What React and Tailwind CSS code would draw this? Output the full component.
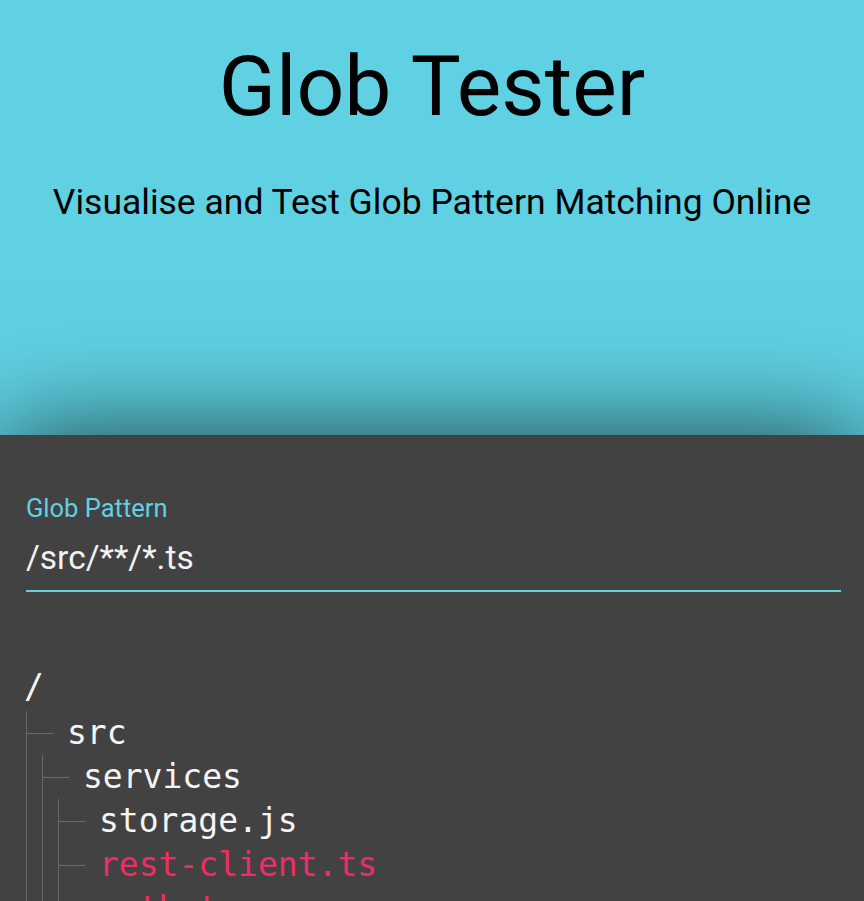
const tree = {
    name: '/',
    children: [
        {
            name: 'src',
            children: [
                {
                    name: 'services',
                    children: [
                        { name: 'storage.js' },
                        { name: 'rest-client.ts', match: true },
                        { name: 'auth.ts', match: true },
                    ],
                },
                { name: 'index.ts', match: true },
            ],
        },
        { name: 'package.json' },
    ],
};

const Branch = ({ nodes }) => (
    <ul className="border-l border-[#6b6b6b]">
        {nodes.map((node) => (
            <li key={node.name}>
                <div className="flex items-center h-[44px]">
                    <span className="w-[26px] h-px bg-[#6b6b6b]"></span>
                    <span className={`ml-[14px] ${node.match ? 'text-[#ee2d65]' : 'text-[#f5f5f5]'}`}>
                        {node.name}
                    </span>
                </div>
                {node.children && (
                    <div className="ml-[15px]">
                        <Branch nodes={node.children} />
                    </div>
                )}
            </li>
        ))}
    </ul>
);

const App = () => {
    return (
        <div className="min-h-screen flex flex-col bg-[#424242] font-['Roboto',sans-serif] overflow-hidden">
            <header className="h-[435px] shrink-0 bg-[#5fd1e2] text-black text-center">
                <h1 className="pt-[45px] text-[84px] leading-[84px] font-normal">Glob Tester</h1>
                <p className="mt-[53px] text-[35.5px] leading-[40px]">Visualise and Test Glob Pattern Matching Online</p>
            </header>

            <main className="relative flex-1 bg-[#424242] shadow-[0_0_100px_rgba(0,0,0,0.7)]">
                <div className="pt-[60px] pl-[26px] pr-[23px]">
                    <label className="block text-[25.5px] leading-[26px] text-[#5fd1e2]">Glob Pattern</label>
                    <div className="mt-[17px] pb-[12px] border-b-2 border-[#5fd1e2]">
                        <input
                            defaultValue="/src/**/*.ts"
                            className="w-full bg-transparent outline-none text-[33.5px] leading-[40px] h-[40px] text-[#f2f2f2]"
                        />
                    </div>
                </div>

                <div className="mt-[75px] pl-[24px] font-['DejaVu_Sans_Mono',monospace] text-[33px] leading-[44px] text-[#f5f5f5]">
                    <div className="h-[44px] -mt-[2px] mb-[2px]">{tree.name}</div>
                    <div className="ml-[2px]">
                        <Branch nodes={tree.children} />
                    </div>
                </div>
            </main>
        </div>
    );
};

export default App;
